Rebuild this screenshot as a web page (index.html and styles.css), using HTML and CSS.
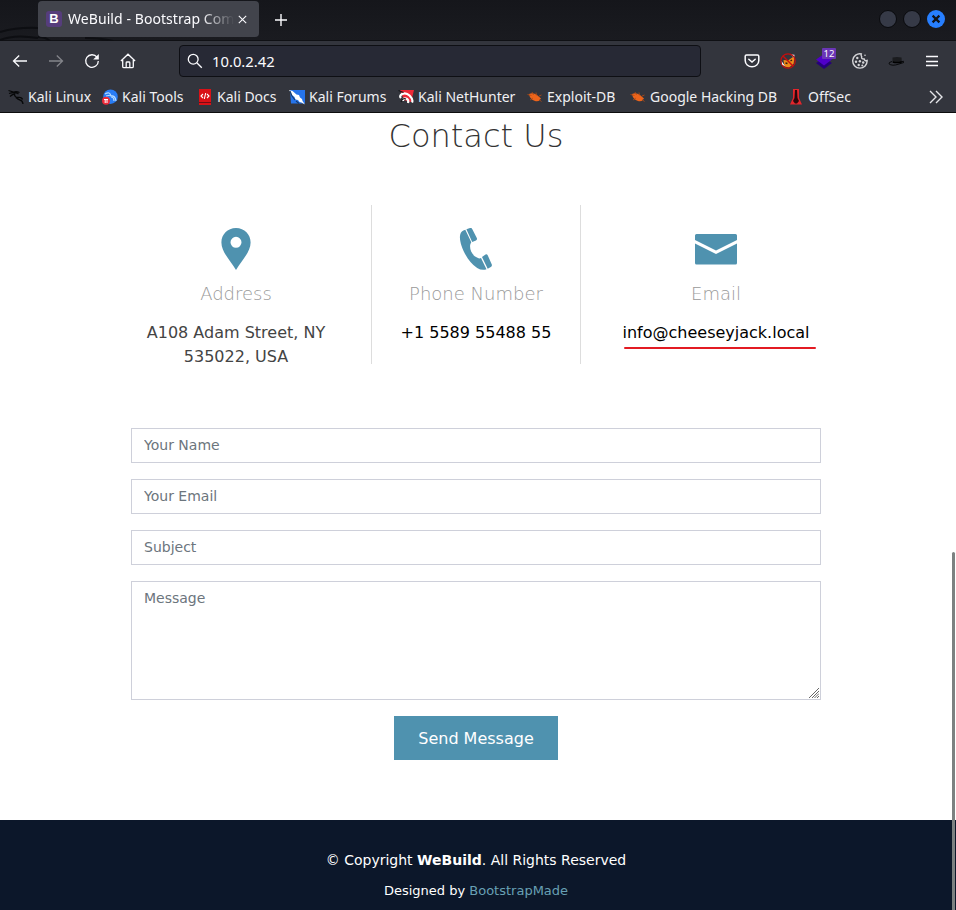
FILE: index.html
```html
<!DOCTYPE html>
<html lang="en">
<head>
<meta charset="utf-8">
<title>WeBuild - Bootstrap Coming Soon</title>
<link rel="stylesheet" href="styles.css">
</head>
<body>
<header class="browser">
  <div class="tabbar">
    <svg class="dragon" width="160" height="41" viewBox="0 0 160 41" fill="none"><path d="M0 32Q18 27 38 28M0 40Q14 34 38 38M38 37q8 0 12 4M85 38q16 0 28 3" stroke="#0d0e12" stroke-width="2"/></svg>
    <div class="tab">
      <span class="favicon">B</span>
      <span class="tab-title">WeBuild - Bootstrap Comi</span>
      <svg class="close" width="9" height="9" viewBox="0 0 9 9"><path d="M.8.8l7.4 7.4M8.2.8L.8 8.2" stroke="#fbfbfe" stroke-width="1.1"/></svg>
    </div>
    <svg class="plus" width="12" height="12" viewBox="0 0 12 12"><path d="M6 0v12M0 6h12" stroke="#fbfbfe" stroke-width="1.4"/></svg>
    <div class="window-buttons">
      <i></i><i></i>
      <svg width="18" height="18" viewBox="0 0 18 18"><circle cx="9" cy="9" r="9" fill="#277fff"/><path d="M5.6 5.6l6.8 6.8M12.4 5.6l-6.8 6.8" stroke="#101319" stroke-width="2.2"/></svg>
    </div>
  </div>
  <div class="toolbar">
    <div class="nav">
      <svg width="16" height="16" viewBox="0 0 16 16"><path d="M15 8H1.8M7.2 2.5L1.5 8l5.7 5.5"/></svg>
      <svg class="dim" width="16" height="16" viewBox="0 0 16 16"><path d="M1 8h13.2M8.8 2.5L14.5 8l-5.7 5.5"/></svg>
      <svg width="16" height="16" viewBox="0 0 16 16"><path d="M13 4.2A6.3 6.3 0 1 0 14.3 8"/><path d="M14.8.9v5.7H9.2z" fill="#fbfbfe" stroke="none"/></svg>
      <svg width="16" height="16" viewBox="0 0 16 16"><path d="M.9 8L8 1.2 15.1 8M2.7 7v6.4q0 1.3 1.3 1.3h8q1.3 0 1.3-1.3V7M6.2 14.5V9.8q0-.8.8-.8h2q.8 0 .8.8v4.7" /></svg>
    </div>
    <div class="urlbar">
      <svg width="16" height="16" viewBox="0 0 16 16"><circle cx="6.2" cy="6.2" r="4.9"/><path d="M9.8 9.8l5 5"/></svg>
      <span>10.0.2.42</span>
    </div>
    <div class="extensions">
      <svg width="16" height="16" viewBox="0 0 16 16"><path d="M2.5 2h11q1.3 0 1.3 1.3V7.5a6.8 6.3 0 0 1-13.6 0V3.3Q1.2 2 2.5 2zM4.8 6.2L8 9.1l3.2-2.900" stroke-width="1.5" stroke-linecap="round"/></svg>
      <svg width="16" height="16" viewBox="0 0 16 16"><path d="M3.500 7L8 7.500 13 4l1.500 1-1 6-4.500 3.500-4.500-1z" fill="#ee8b18" stroke="none"/><path d="M11 1.500l3.500.3L14 5zM1.500 8l3.500 5-3-1z" fill="#fff" stroke="none"/><path d="M5.500 10l2 .5M10.500 8l1.500-1" stroke="#331d13"/><circle cx="8" cy="8" r="7.200" stroke="#c70d0d" stroke-width="1.200"/><path d="M3 3l10 10" stroke="#c70d0d" stroke-width="1.400"/></svg>
      <span class="layers">
        <svg width="16" height="16" viewBox="0 0 16 16"><path d="M0 10l8-5 8 5-8 6z" fill="#26007b" stroke="none"/><path d="M0 6.500L8 1l8 5.500-8 6z" fill="#5000c8" stroke="none"/></svg>
        <b class="count">12</b>
      </span>
      <svg width="16" height="16" viewBox="0 0 16 16"><path d="M9.300.9a7.200 7.200 0 1 0 5.800 6.600q-2.200.8-2.900-1.500Q9 6.200 9.700 3.700 8.800 2.500 9.300.9z" stroke="#d5d5d8" stroke-width="1.400"/><g fill="#d5d5d8" stroke="none"><circle cx="5.300" cy="5" r="1.200"/><circle cx="4" cy="8.800" r="1.200"/><circle cx="7.900" cy="8.300" r="1.200"/><circle cx="6.700" cy="12" r="1.200"/><circle cx="11.200" cy="9.500" r="1.200"/><circle cx="10.300" cy="12.500" r="1"/><circle cx="13" cy="2.300" r=".8"/></g></svg>
      <svg width="16" height="16" viewBox="0 0 16 16"><path d="M4.500 9V4.500Q9 3.500 13.500 4.500L13.800 9Q9 11 4.500 9z" fill="#1b1c1f" stroke="none"/><path d="M4 8.500Q.5 9.300 1 10.800 4 13.500 11 11L15.800 9.500 15.500 8.300 13.800 8.600" stroke="#08090b" stroke-width="1"/><path d="M4.800 9q4.500 1.300 9-.3" stroke="#000" stroke-width="1.500"/></svg>
      <svg width="16" height="16" viewBox="0 0 16 16"><path d="M2 3.500h12M2 8.500h12M2 12.500h12"/></svg>
    </div>
  </div>
  <nav class="bookmarks">
    <a><svg width="16" height="16" viewBox="0 0 16 16"><path d="M.5 1.500l5 1.500q3-1 6 .5M1 4.500q4-1.500 8-.5l1.500 1M2 7.500q2-2 4.500-2.500 0 3.500 3.500 3.500 4-.5 4.500 2M8 8.500q2 2 4 2.500 2.500.5 3 4" fill="none" stroke="#070809" stroke-width="1.300"/></svg>Kali Linux</a>
    <a><svg width="16" height="16" viewBox="0 0 16 16"><circle cx="8.500" cy="7.700" r="7.300" fill="#287cf5"/><path d="M3 5q5-3 6 2 4-1 5 5M4 7l5-1M9 8q3 0 3 4" fill="none" stroke="#b7dcff" stroke-width="1.200"/><circle cx="4" cy="11.800" r="4" fill="#ed2938"/><path d="M2 10.500h4M3.200 10v4M5 10v4" stroke="#fff"/></svg>Kali Tools</a>
    <a><svg width="16" height="16" viewBox="0 0 16 16"><path d="M2 0h12v16H2z" fill="#d91117"/><path d="M2 13.500h12" stroke="#760b12"/><path d="M6 5L4 7l2 2M10 5l2 2-2 2M8.700 4L7.300 10" fill="none" stroke="#fff" stroke-width="1.100"/></svg>Kali Docs</a>
    <a><svg width="16" height="16" viewBox="0 0 16 16"><path d="M1 1h15v13.500H2z" fill="#2674eb"/><path d="M0 1l3.500 1 4 3.500 2.500.5 1 2.500 2 1.500.5 2 2.500 3.500-3.500-2-2-.5-1.500-2-2.500-.5-1-2.500-2.500-2z" fill="#fff"/><path d="M1 2l2 5 3 4M7 12l3 2.500" fill="none" stroke="#173a68" stroke-width="1.100"/></svg>Kali Forums</a>
    <a><svg width="16" height="16" viewBox="0 0 16 16"><path d="M2 1h14l-3 12-7-2z" fill="#ed2938"/><path d="M3 9q-2-2 1-4 4-2 7.500 1.500 4 4 2.500 7M5 12q0-3 3-2.500 3 1 2 4.500" fill="none" stroke="#fff" stroke-width="2.200"/><path d="M.5 1.500l5 2M3 13q1.500-4.500 5-3" stroke="#17181b" stroke-width="1.200" fill="none"/></svg>Kali NetHunter</a>
    <a><svg width="16" height="16" viewBox="0 0 16 16"><path d="M2 5q4-2 8 1l4 3.500q-2 3.500-6 2.500Q3 10.500 2 5z" fill="#ed641b"/><path d="M.5 5.500l4 1M5 3l1.500 3M9 3.500l.5 3M12 7l2.500-1M3 11l3-2M12 10.500l2.500 2" stroke="#b84b12" stroke-width=".8"/></svg>Exploit-DB</a>
    <a><svg width="16" height="16" viewBox="0 0 16 16"><path d="M2 5q4-2 8 1l4 3.500q-2 3.500-6 2.500Q3 10.500 2 5z" fill="#ed641b"/><path d="M.5 5.500l4 1M5 3l1.500 3M9 3.500l.5 3M12 7l2.500-1M3 11l3-2M12 10.500l2.500 2" stroke="#b84b12" stroke-width=".8"/></svg>Google Hacking DB</a>
    <a><svg width="16" height="16" viewBox="0 0 16 16"><path d="M5 0h6v9l3 6.500H2L5 9z" fill="#e4252b"/><path d="M7 1h2l.5 8 1.500 3-2 2.500H7L5 12l1.500-3z" fill="#2a080c"/></svg>OffSec</a>
    <svg class="more" width="14" height="14" viewBox="0 0 14 14"><path d="M1 1l6 6-6 6M7 1l6 6-6 6" fill="none" stroke="#e5e5e8" stroke-width="1.400"/></svg>
  </nav>
</header>

<main class="contact">
  <h1>Contact Us</h1>
  <section class="info">
    <div class="card">
      <svg width="42" height="42" viewBox="0 0 42 42"><path fill-rule="evenodd" d="M21 0C12.500 0 6.400 6.500 6.400 14.500 6.400 24 15 32 21 42 27 32 35.600 24 35.600 14.500 35.600 6.500 29.500 0 21 0zm0 8.800a5.500 5.500 0 1 1 0 11 5.500 5.500 0 0 1 0-11z"/></svg>
      <h2>Address</h2>
      <address>A108 Adam Street, NY 535022, USA</address>
    </div>
    <div class="card middle">
      <svg width="42" height="42" viewBox="0 0 42 42"><path d="M10.300 1.800L16.300 14.300C13.500 18 15.500 27 22.500 29.800Q24.500 31 26 30L31.500 41.300Q24 44 15.500 34C8 25 3.500 12 5.300 6.200Q6 3.200 10.300 1.800zM11.400 1.200L15 0Q16.300-.4 17.200 1L21.800 10Q22.500 11.500 21 12.500L17.200 14zM27 29L30.500 26.600Q31.800 25.800 32.700 27.200L36.800 36.500Q37.300 38 35.800 39L32.700 40.800z"/></svg>
      <h2>Phone Number</h2>
      <p>+1 5589 55488 55</p>
    </div>
    <div class="card">
      <svg width="42" height="42" viewBox="0 0 42 42"><path d="M1.500 6h39Q42 6 42 7.500V12L21 22.500 0 12V7.500Q0 6 1.500 6zM0 15.500L21 26 42 15.500V35q0 1.500-1.500 1.500h-39Q0 36.500 0 35z"/></svg>
      <h2>Email</h2>
      <p class="email">info@cheeseyjack.local</p>
    </div>
  </section>
  <form>
    <input type="text" placeholder="Your Name">
    <input type="email" placeholder="Your Email">
    <input type="text" placeholder="Subject">
    <div class="message">
      <textarea placeholder="Message"></textarea>
      <svg class="grip" width="10" height="10" viewBox="0 0 10 10"><path d="M0 10L10 0M3 10l7-7M5.500 10L10 5.500M8 10l2-2" stroke="#686868" stroke-width="1"/></svg>
    </div>
    <button type="button">Send Message</button>
  </form>
</main>

<footer>
  <p class="copyright">© Copyright <strong>WeBuild</strong>. All Rights Reserved</p>
  <p class="credits">Designed by <a>BootstrapMade</a></p>
</footer>
<div class="scrollbar"></div>
</body>
</html>
```

FILE: styles.css
```css
* { box-sizing: border-box; }
body { margin: 0; height: 910px; overflow: hidden; display: flex; flex-direction: column; background: #fff; color: #444; font: 16px/24px "DejaVu Sans", sans-serif; }
h1, h2, p { margin: 0; }
svg { display: block; flex: none; }

.browser { height: 113px; flex: none; background: #33353d; border-bottom: 1px solid #0c0c0d; color: #fbfbfe; font-family: "Noto Sans", sans-serif; }
.tabbar { position: relative; height: 41px; display: flex; align-items: flex-start; padding: 1px 11px 0 38px; background: linear-gradient(#15161b, #1a1b20); border-bottom: 1px solid #0f1014; }
.dragon { position: absolute; left: 0; top: 0; }
.tab { position: relative; width: 221px; height: 36px; display: flex; align-items: center; padding: 0 12px 0 8px; border-radius: 4px; background: #42444c; font-size: 14px; }
.favicon { width: 16px; height: 16px; border-radius: 3px; background: #563d7c; color: #fff; font: bold 13px/16px "Liberation Sans", sans-serif; text-align: center; }
.tab-title { flex: 1; margin-left: 6px; letter-spacing: .07px; white-space: nowrap; -webkit-mask-image: linear-gradient(to right, #000 79%, transparent 99%); mask-image: linear-gradient(to right, #000 79%, transparent 99%); }
.tab-title { min-width: 0; }
.close { margin-left: 2px; }
.plus { margin: 13px 0 0 16px; }
.window-buttons { display: flex; gap: 6px; margin: 9px 0 0 auto; }
.window-buttons i { width: 18px; height: 18px; border-radius: 50%; background: #363a47; border: 1px solid #090a0d; }

.toolbar { height: 40px; display: flex; align-items: center; padding: 0 16px 0 12px; }
.toolbar svg { fill: none; stroke: #fbfbfe; stroke-width: 1.3; }
.nav { display: flex; gap: 20px; width: 167px; }
.nav .dim { opacity: .4; }
.urlbar { width: 522px; height: 32px; display: flex; align-items: center; gap: 9px; padding-left: 7px; background: #272935; border: 1px solid #0e0f14; border-radius: 4px; font-size: 14.8px; }
.extensions { display: flex; gap: 20px; margin-left: auto; }
.layers { position: relative; width: 16px; }
.count { position: absolute; left: 6px; top: -5px; width: 14px; height: 11px; background: #6a36b5; border-radius: 1px; font: 9.5px/11px "Noto Sans", sans-serif; text-align: center; }
.bookmarks { position: relative; height: 31px; display: grid; grid-template-columns: 94px 95px 92px 109px 129px 103px 158px 100px; align-items: center; padding-left: 8px; font-size: 14px; color: #f0f0f3; }
.bookmarks a { display: flex; align-items: center; gap: 4px; white-space: nowrap; }
.more { position: absolute; right: 13px; top: 9px; }

.contact { flex: none; height: 707px; padding: 4px 4px 0 0; }
h1 { font-size: 32px; line-height: 38px; font-weight: 200; text-align: center; color: #333; }
.info { display: grid; grid-template-columns: repeat(3, 240px); justify-content: center; margin-top: 50px; }
.card { height: 159px; padding-top: 23px; display: flex; flex-direction: column; align-items: center; text-align: center; }
.card svg { fill: #4f92af; }
.middle { margin: 0 15px; border: solid #ddd; border-width: 0 1px; }
.card h2 { margin: 12px 0 15px; font-size: 18px; line-height: 24px; font-weight: 200; color: #999; }
.card p { color: #000; white-space: nowrap; }
address { width: 210px; font-style: normal; }
.email { position: relative; }
.email::after { content: ""; position: absolute; left: 1px; top: 26px; width: 192px; height: 2px; border-radius: 1px; background: #e31b23; }
form { width: 690px; margin: 64px auto 0; display: flex; flex-direction: column; gap: 16px; }
input, textarea { display: block; width: 100%; height: 35px; margin: 0; padding: 5px 12px 7px; border: 1px solid #ced0da; border-radius: 0; outline: 0; background: #fff; font: 14px/21px "DejaVu Sans", sans-serif; }
textarea { height: 119px; padding-top: 6px; resize: none; }
::placeholder { color: #6c757d; opacity: 1; }
.message { position: relative; }
.grip { position: absolute; right: 2px; bottom: 2px; }
button { align-self: center; width: 164px; height: 44px; padding: 2px 0 0; border: 0; background: #4f92af; color: #fff; font: 16px/24px "DejaVu Sans", sans-serif; }

footer { flex: none; height: 90px; padding: 30px 4px 0 0; background: #0c172a; color: #fff; text-align: center; }
.copyright { font-size: 14px; line-height: 21px; }
.credits { margin-top: 10px; font-size: 13px; line-height: 20px; }
.credits a { color: #68a0b4; }
.scrollbar { position: absolute; right: 1px; top: 552px; width: 3px; height: 358px; background: #7c8181; border-radius: 2px 2px 0 0; }
```
